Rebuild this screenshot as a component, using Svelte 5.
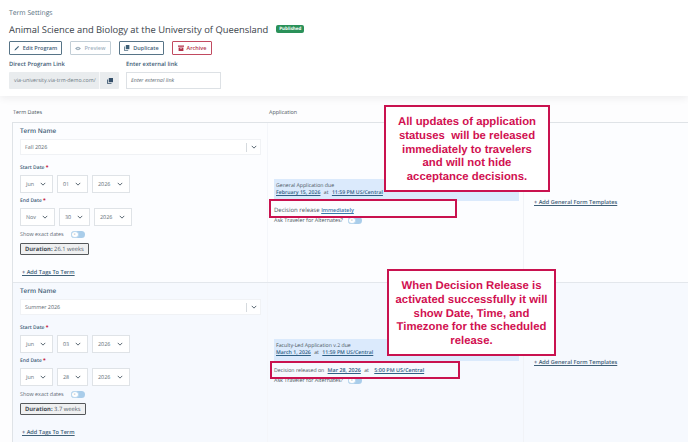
<script>
  const terms = [
    {
      name: 'Fall 2026',
      start: [['Jun', 33], ['01', 31], ['2026', 38]],
      end: [['Nov', 35], ['30', 31], ['2026', 38]],
      duration: '26.1 weeks',
      due: 'General Application due',
      date: 'February 15, 2026',
      time: '11:59 PM US/Central',
      release: false
    },
    {
      name: 'Summer 2026',
      start: [['Jun', 33], ['03', 31], ['2026', 38]],
      end: [['Jun', 33], ['28', 31], ['2026', 38]],
      duration: '3.7 weeks',
      due: 'Faculty-Led Application v.2 due',
      date: 'March 1, 2026',
      time: '11:59 PM US/Central',
      release: true
    }
  ];
</script>

{#snippet chev()}
  <svg class="chev" viewBox="0 0 8 5" width="6" height="4"><path d="M1 1l3 3 3-3" fill="none" stroke="#56646f" stroke-width="1.300"/></svg>
{/snippet}

{#snippet dateRow(items)}
  <div class="dates">
    {#each items as [v, w]}
      <div class="sel" style="width:{w}px"><span>{v}</span>{@render chev()}</div>
    {/each}
  </div>
{/snippet}

<div class="page">
  <header>
    <div class="crumb">Term Settings</div>
    <div class="titlerow">
      <h1>Animal Science and Biology at the University of Queensland</h1>
      <span class="badge">Published</span>
    </div>
    <div class="btns">
      <button class="b edit">
        <svg viewBox="0 0 10 10" width="6" height="6"><path d="M1 9l.5-2L7 1.500 8.500 3 3 8.500z" fill="#3f6077"/></svg>
        Edit Program
      </button>
      <button class="b prev">
        <svg viewBox="0 0 10 8" width="6" height="5"><path d="M0 4q5-6 10 0q-5 6-10 0z" fill="#9fb0bd"/><circle cx="5" cy="4" r="1.300" fill="#fff"/></svg>
        Preview
      </button>
      <button class="b dup">
        <svg viewBox="0 0 10 10" width="6" height="6"><path d="M3 0h6v7H3z" fill="#3f6077"/><path d="M1 2.500v7h6" fill="none" stroke="#3f6077" stroke-width="1.400"/></svg>
        Duplicate
      </button>
      <button class="b arch">
        <svg viewBox="0 0 10 10" width="6" height="6"><path d="M0 1h10v2H0zM1 4h8v6H1z" fill="#b3324a"/><path d="M3.500 6h3" stroke="#fff"/></svg>
        Archive
      </button>
    </div>
    <div class="links">
      <div class="lk first">
        <label for="direct">Direct Program Link</label>
        <div class="copy" id="direct">
          <span class="url">via-university.via-trm-demo.com/</span>
          <span class="cbtn"><svg viewBox="0 0 10 10" width="6" height="6"><path d="M3 0h7v7H3z" fill="#35506a"/><path d="M1 2.500v7h6.500" fill="none" stroke="#35506a" stroke-width="1.500"/></svg></span>
        </div>
      </div>
      <div class="lk">
        <label for="external">Enter external link</label>
        <div class="ext" id="external">Enter external link</div>
      </div>
    </div>
  </header>

  <main>
    <div class="heads">
      <div class="h1">Term Dates</div>
      <div>Application</div>
    </div>
    <div class="table">
      {#each terms as t, i}
        <section class="row" class:alt={i === 1}>
          <div class="c1">
            <div class="tn">Term Name</div>
            <div class="nameinput">
              <span>{t.name}</span>
              <span class="sep"></span>
              {@render chev()}
            </div>
            <div class="dl">Start Date <b>*</b></div>
            {@render dateRow(t.start)}
            <div class="dl">End Date <b>*</b></div>
            {@render dateRow(t.end)}
            <div class="exact">Show exact dates <span class="tog"><i>x</i></span></div>
            <div class="dur"><b>Duration:</b> {t.duration}</div>
            <span class="tags">+ Add Tags To Term</span>
          </div>
          <div class="c2">
            <div class="due">
              <div>{t.due}</div>
              <div><u>{t.date}</u> <span class="at">at</span> <u>{t.time}</u></div>
            </div>
            {#if t.release}
              <div class="rel small">Decision released on <u>Mar 28, 2026</u> <span class="at">at</span> <u>5:00 PM US/Central</u></div>
            {:else}
              <div class="rel">Decision release <u>Immediately</u></div>
            {/if}
            <div class="alt-q">Ask Traveler for Alternates? <span class="tog"><i>x</i></span></div>
          </div>
          <div class="c3"><u>+ Add General Form Templates</u></div>
        </section>
      {/each}
    </div>
  </main>

  <div class="note n1">All updates of application<br />statuses&nbsp; will be released<br />immediately to travelers<br />and will not hide<br />acceptance decisions.</div>
  <div class="hl h-a"></div>
  <div class="note n2">When Decision Release is<br />activated successfully it will<br />show Date, Time, and<br />Timezone for the scheduled<br />release.</div>
  <div class="hl h-b"></div>
</div>

<style>
  :global(body) { margin: 0; background: #fff; }
  .page {
    position: relative;
    width: 688px;
    height: 442px;
    overflow: hidden;
    font-family: "Open Sans", "Noto Sans", sans-serif;
    text-rendering: geometricPrecision;
    color: #4a5660;
    background: #fdfdfe;
  }
  header {
    height: 96px;
    box-sizing: border-box;
    padding: 8px 9px 0;
    background: #fff;
    box-shadow: 0 2px 8px rgba(0, 0, 0, 0.07);
    position: relative;
  }
  .crumb { font-size: 6.800px; line-height: 10px; color: #56707f; }
  .titlerow { display: flex; align-items: center; gap: 8px; margin-top: 4px; height: 14px; }
  h1 { margin: 0; font-size: 9.400px; font-weight: 400; color: #3a434b; white-space: nowrap; }
  .badge {
    background: #2a9159; color: #fff; font-size: 4.500px; font-weight: 700;
    padding: 1px 3px; border-radius: 2px; line-height: 6px;
  }
  .btns { display: flex; margin-top: 5px; gap: 8px; }
  .b {
    height: 14px; padding: 0; display: flex; align-items: center; justify-content: center; gap: 3px;
    font: 600 5.500px "Open Sans", sans-serif; background: #fff; box-sizing: border-box; border-radius: 1px;
  }
  .edit { width: 53px; border: 1px solid #577487; color: #3f6077; }
  .prev { width: 41px; border: 1px solid #c2ced6; color: #a3b3bf; }
  .dup { width: 45px; border: 1px solid #577487; color: #3f6077; }
  .arch { width: 40px; border: 1px solid #c14a60; color: #b3324a; }
  .links { display: flex; gap: 7px; margin-top: 5px; }
  label { display: block; font-size: 5.800px; font-weight: 600; color: #3f6077; line-height: 9px; }
  .lk { display: flex; flex-direction: column; gap: 3px; }
  .copy { display: flex; width: 110px; height: 17px; background: #e9ecee; border-radius: 1px; }
  .url { width: 91px; box-sizing: border-box; padding: 0 5px; font-size: 5.300px; line-height: 17px; color: #6b7882; white-space: nowrap; overflow: hidden; border-right: 1px solid #f8f9fa; }
  .cbtn { flex: 1; display: flex; align-items: center; justify-content: center; }
  .ext {
    width: 95px; height: 17px; box-sizing: border-box; border: 1px solid #dde1e5; padding-left: 4px;
    font-size: 5.400px; line-height: 15px; font-style: italic; color: #5e6a74; background: #fff;
  }
  .heads { display: flex; font-size: 5.400px; color: #4a5660; padding: 6px 0 0 13px; height: 20px; align-items: center; }
  .h1 { width: 256px; }
  .table { margin-left: 12px; border-top: 1px solid #dfe3e7; border-left: 1px solid #dfe3e7; }
  .row { display: flex; height: 159px; background: #fcfdff; border-bottom: 1px solid #e3e7ec; }
  .row.alt { background: #f6f9fe; }
  .c1 { width: 255px; box-sizing: border-box; padding: 3px 7px; border-right: 1px solid #f4f6fa; }
  .tn { font-size: 6.400px; font-weight: 600; color: #3f6077; line-height: 10px; }
  .nameinput {
    display: flex; align-items: center; height: 16px; width: 241px; box-sizing: border-box; margin-top: 3px;
    padding: 0 3px 0 4px; background: #fff; border: 1px solid #f0f2f5; font-size: 5.400px; color: #5e6a74;
  }
  .nameinput span:first-child { flex: 1; }
  .sep { width: 1px; height: 9px; background: #d5dade; margin-right: 4px; }
  .dl { font-size: 5px; font-weight: 600; color: #3f6077; line-height: 8px; margin-top: 9px; }
  .dl b { color: #c4203a; }
  .dates { display: flex; gap: 4px; margin-top: 3px; }
  .sel {
    height: 18px; box-sizing: border-box; border: 1px solid #dfe3e7; background: #fff;
    display: flex; align-items: center; justify-content: space-between; padding: 0 6px 0 5px;
    font-size: 5.400px; color: #65717b;
  }
  .dates + .dl { margin-top: 4px; }
  .exact { display: flex; align-items: center; gap: 7px; font-size: 5.400px; color: #5e6a74; margin-top: 4px; height: 8px; }
  .tog { display: inline-block; width: 14px; height: 7px; border-radius: 4px; background: #a9cdea; position: relative; }
  .tog i { position: absolute; left: 0; top: 0; width: 8px; height: 7px; border-radius: 50%; background: #fff; border: 1px solid #bcd8ee; box-sizing: border-box; font: 3px/5px "Open Sans", sans-serif; text-align: center; color: #7a8790; }
  .dur {
    width: fit-content; margin-top: 5px; padding: 0 4px; height: 12px; line-height: 10px; box-sizing: border-box;
    border: 1px solid #55585b; border-radius: 1px; background: #eff0f1; font-size: 5.800px; color: #55606a;
  }
  .dur b { font-weight: 700; color: #444c54; }
  .tags { display: block; margin: 13px 0 0 2px; line-height: 8px; font-size: 5.600px; font-weight: 600; color: #3f6077; text-decoration: underline; }
  .c2 { width: 255px; box-sizing: border-box; padding: 56px 4px 0 6px; font-size: 5.400px; color: #4a5660; }
  .due { background: #dbeafc; height: 22px; width: 245px; padding: 3px 0 0 2px; box-sizing: border-box; line-height: 7px; font-size: 5.200px; margin-bottom: 4px; }
  .due u { color: #2f6085; font-weight: 600; }
  .at { margin: 0 2px; }
  .rel { font-size: 6px; line-height: 10px; }
  .rel u { color: #3a78ab; font-size: 5.400px; font-weight: 600; }
  .rel.small { font-size: 5.200px; }
  .rel.small u { margin-left: 2px; color: #2f6085; }
  .alt-q { display: flex; align-items: center; gap: 5px; font-size: 5.400px; margin-top: 1px; height: 8px; }
  .c3 { padding: 75px 0 0 10px; font-size: 5.600px; font-weight: 600; white-space: nowrap; border-left: 1px solid #f1f3f7; color: #3f6077; }
  .note {
    position: absolute; box-sizing: border-box; background: #fff; border: 2.500px solid #c9124f; padding-top: 4px;
    color: #d10f50; font: 700 11.350px/13.670px "Liberation Sans", Arial, sans-serif; text-align: center;
    display: flex; align-items: center; justify-content: center;
  }
  .n1 { left: 384px; top: 105px; width: 166px; height: 87px; }
  .n2 { left: 387px; top: 269px; width: 169px; height: 87px; }
  .hl { position: absolute; box-sizing: border-box; border: 2.500px solid #c9124f; }
  .h-a { left: 269px; top: 199px; width: 188px; height: 19px; }
  .h-b { left: 270px; top: 361px; width: 190px; height: 18px; }
</style>
